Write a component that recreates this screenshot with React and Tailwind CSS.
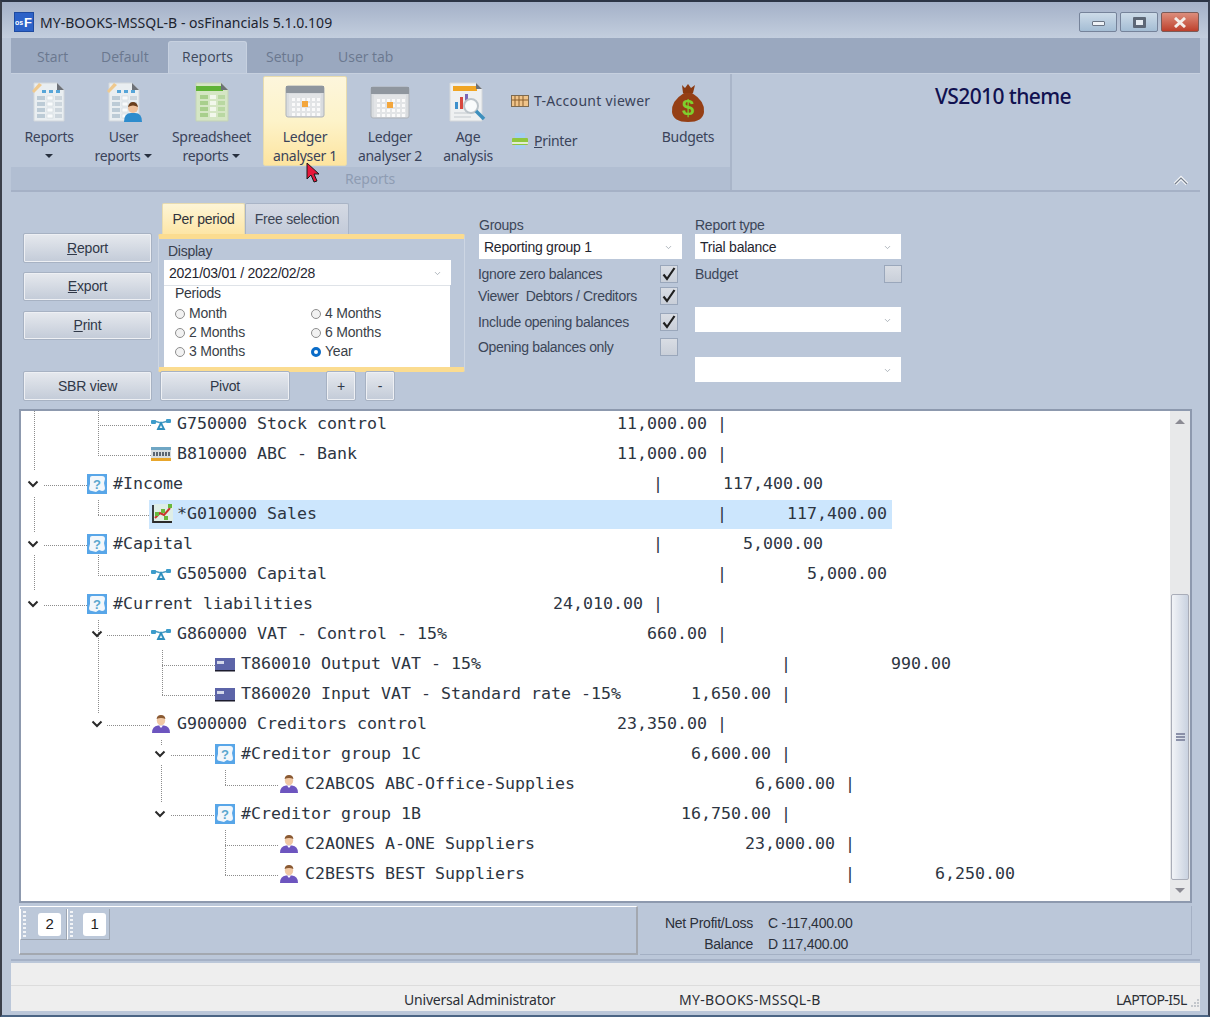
import { ChevronDown } from "lucide-react";

const treeRows = [
  { lvl: 1, icon: "net", name: "G750000 Stock control", l: "11,000.00" },
  { lvl: 1, icon: "bank", name: "B810000 ABC - Bank", l: "11,000.00" },
  { lvl: 0, icon: "q", name: "#Income", r: "117,400.00" },
  { lvl: 1, icon: "chart", name: "*G010000 Sales", r: "117,400.00", sel: true },
  { lvl: 0, icon: "q", name: "#Capital", r: "5,000.00" },
  { lvl: 1, icon: "net", name: "G505000 Capital", r: "5,000.00" },
  { lvl: 0, icon: "q", name: "#Current liabilities", l: "24,010.00" },
  { lvl: 1, icon: "net", name: "G860000 VAT - Control - 15%", l: "660.00" },
  { lvl: 2, icon: "card", name: "T860010 Output VAT - 15%", r: "990.00" },
  { lvl: 2, icon: "card", name: "T860020 Input VAT - Standard rate -15%", l: "1,650.00" },
  { lvl: 1, icon: "person", name: "G900000 Creditors control", l: "23,350.00" },
  { lvl: 2, icon: "q", name: "#Creditor group 1C", l: "6,600.00" },
  { lvl: 3, icon: "person", name: "C2ABCOS ABC-Office-Supplies", l: "6,600.00" },
  { lvl: 2, icon: "q", name: "#Creditor group 1B", l: "16,750.00" },
  { lvl: 3, icon: "person", name: "C2AONES A-ONE Suppliers", l: "23,000.00" },
  { lvl: 3, icon: "person", name: "C2BESTS BEST Suppliers", r: "6,250.00" },
];

const levelPad = ["pl-[64px]", "pl-[128px]", "pl-[192px]", "pl-[256px]"];

// the report is one monospaced string per row, same as the original grid
const rowText = (row) => {
  const left = row.name.padEnd(53 - (row.l || "").length) + (row.l || "");
  return left.padEnd(54) + "|" + (row.r ? row.r.padStart(16) : "");
};

function NetIcon() {
  return (
    <svg width="20" height="20" viewBox="0 0 20 20">
      <path d="M3 7 L10 9 L17 7" stroke="#4a9cc4" strokeWidth="1.5" fill="none" />
      <rect x="0" y="6" width="5" height="4" rx="1" fill="#3d9ccb" />
      <rect x="15" y="5" width="5" height="4" rx="1" fill="#3d9ccb" />
      <path d="M7 15 L10 9 L13 15 Z" fill="#e8f4fa" stroke="#2f8fbe" strokeWidth="1.8" />
    </svg>
  );
}

function BankIcon() {
  return (
    <svg width="20" height="20" viewBox="0 0 20 20">
      <rect x="0" y="3" width="20" height="3" fill="#6fa6c4" />
      <rect x="0" y="6" width="20" height="8" fill="#d7dde0" />
      {[2, 5, 8, 11, 14, 17].map((x) => (
        <rect key={x} x={x} y="8" width="2" height="4" fill="#5b6672" />
      ))}
      <rect x="0" y="14" width="20" height="3" fill="#e8a62c" />
    </svg>
  );
}

function QuestionIcon() {
  return (
    <svg width="20" height="20" viewBox="0 0 20 20">
      <rect width="20" height="20" fill="#58a6e8" />
      <path d="M3 4 Q3 2 5 2 L15 2 Q18 2 18 5 L17 9 L18 14 Q18 17 15 17 L12 16 L9 18 L5 17 Q2 17 2 14 L3 10 Z" fill="#f2f7fb" />
      <text x="10" y="14.5" textAnchor="middle" fontSize="13" fontWeight="700" fill="#5aa7cf" fontFamily="Liberation Sans, sans-serif">?</text>
    </svg>
  );
}

function ChartIcon() {
  return (
    <svg width="22" height="20" viewBox="0 0 22 20">
      <rect x="3" y="0" width="19" height="17" fill="#dfeee6" />
      <path d="M2 1 V18 H21" stroke="#2b2b2b" strokeWidth="1.8" fill="none" />
      <path d="M4 14 L9 9 L13 11 L19 4" stroke="#c8352d" strokeWidth="2" fill="none" />
      <rect x="4" y="8" width="4" height="4" fill="#68b83c" />
      <rect x="10" y="5" width="4" height="4" fill="#68b83c" />
      <rect x="13" y="12" width="4" height="4" fill="#68b83c" />
      <rect x="17" y="0" width="4" height="4" fill="#68b83c" />
    </svg>
  );
}

function CardIcon() {
  return (
    <svg width="20" height="20" viewBox="0 0 20 20">
      <rect x="0" y="4" width="20" height="13" fill="#5c64a8" />
      <rect x="2" y="7" width="7" height="3" fill="#d4d8ea" />
      <rect x="0" y="16" width="20" height="1.5" fill="#1c1c2e" />
    </svg>
  );
}

function PersonIcon() {
  return (
    <svg width="20" height="20" viewBox="0 0 20 20">
      <path d="M1 19 Q1 12 7 11.5 L13 11.5 Q19 12 19 19 Z" fill="#6d55bf" />
      <ellipse cx="10" cy="6.5" rx="4.2" ry="5" fill="#f1c9a5" />
      <path d="M5.6 5 Q6 1 10 1 Q14 1 14.4 5 Q10 3 5.6 5 Z" fill="#8a5a33" />
      <path d="M8 11.5 L10 14 L12 11.5 Z" fill="#ffffff" />
    </svg>
  );
}

const treeIcons = { net: NetIcon, bank: BankIcon, q: QuestionIcon, chart: ChartIcon, card: CardIcon, person: PersonIcon };

// dotted connectors and expanders, coordinates are tree local (page minus 21,411)
function TreeLines() {
  const dots = [
    "M13 0V59", "M13 86V122", "M13 144V179",
    "M77 0V44", "M77 14H130", "M77 44H130",
    "M23 74H67", "M77 89V104", "M77 104H129",
    "M23 134H67", "M77 144V164", "M77 164H129",
    "M23 194H67", "M77 209V302",
    "M86 224H130", "M141 239V284", "M141 254H194", "M141 284H194",
    "M86 314H130", "M140 329V334", "M150 344H194", "M140 354V392",
    "M150 404H194", "M204 359V374", "M204 374H258", "M204 419V464", "M204 434H258", "M204 464H258",
  ];
  const chevrons = [[12, 73], [12, 133], [12, 193], [76, 223], [76, 313], [139, 343], [139, 403]];
  return (
    <svg className="absolute left-0 top-0 pointer-events-none" width="300" height="492">
      {dots.map((d) => (
        <path key={d} d={d} stroke="#8c8c8c" strokeDasharray="1 1" fill="none" shapeRendering="crispEdges" />
      ))}
      {chevrons.map(([x, y]) => (
        <path key={x + "-" + y} d={`M${x - 4.5} ${y - 2.5} L${x} ${y + 2} L${x + 4.5} ${y - 2.5}`} stroke="#2a2a2a" strokeWidth="2" fill="none" />
      ))}
    </svg>
  );
}

function ReportDoc({ user }) {
  return (
    <svg width="38" height="42" viewBox="0 0 38 42">
      <path d="M4 1 H27 L34 8 V39 H4 Z" fill="#e9eef1" stroke="#d3d8dc" />
      <path d="M27 1 L34 8 H27 Z" fill="#6d7178" />
      <path d="M2 9 L9 1 L12 3 L4 11 Z" fill="#efc98e" />
      <rect x="12" y="8" width="4" height="3" fill="#56a5d8" />
      <rect x="19" y="8" width="4" height="3" fill="#56a5d8" />
      <rect x="26" y="8" width="4" height="3" fill="#56a5d8" />
      {[14, 20, 26, 32].map((y) => (
        <g key={y}>
          <rect x="7" y={y} width="8" height="4" fill="#bccbd6" />
          <rect x="17" y={y} width="6" height="4" fill="#f9fbfc" stroke="#c7d0d6" strokeWidth="0.5" />
          <rect x="25" y={y} width="7" height="4" fill="#cdd6dd" />
        </g>
      ))}
      {user && (
        <g>
          <path d="M19 40 Q19 31 26 31 L30 31 Q37 31 37 40 Z" fill="#2d8ccd" />
          <circle cx="28" cy="26" r="5" fill="#eec09a" />
          <path d="M23 25 Q24 20 28 20 Q32 20 33 25 Q28 22 23 25 Z" fill="#6b3f1d" />
        </g>
      )}
    </svg>
  );
}

function SheetDoc() {
  return (
    <svg width="38" height="42" viewBox="0 0 38 42">
      <path d="M3 1 H28 L35 8 V39 H3 Z" fill="#d5e6c4" stroke="#c4d3b6" />
      <rect x="3" y="4" width="27" height="5" fill="#5fb336" />
      <path d="M28 1 L35 8 H28 Z" fill="#6d7178" />
      {[13, 19, 25, 31].map((y) => (
        <g key={y}>
          <rect x="7" y={y} width="8" height="4" fill="#a8cf8c" />
          <rect x="17" y={y} width="6" height="4" fill="#f2f7ec" />
          <rect x="25" y={y} width="7" height="4" fill="#b9d8a2" />
        </g>
      ))}
    </svg>
  );
}

function CalendarIcon() {
  const cols = [7, 12, 17, 22, 27, 32];
  const lines = [13, 18, 23, 28];
  return (
    <svg width="40" height="34" viewBox="0 0 40 34">
      <rect x="1" y="1" width="38" height="31" rx="2" fill="#d9dcdf" stroke="#aeb3b9" />
      <rect x="1" y="1" width="38" height="7" fill="#8f969e" />
      <rect x="4" y="9" width="32" height="22" fill="#e2e4e6" />
      {lines.map((y) => cols.map((x) => <rect key={x + "-" + y} x={x} y={y} width="3" height="3" fill="#fafafa" />))}
      <rect x="17" y="16" width="6" height="6" fill="#f3a63c" />
    </svg>
  );
}

function AgeIcon() {
  return (
    <svg width="38" height="42" viewBox="0 0 38 42">
      <path d="M1 1 H27 L33 7 V39 H1 Z" fill="#eef0f1" stroke="#d5d8da" />
      <rect x="4" y="4" width="24" height="5" fill="#f0a524" />
      <path d="M27 1 L33 7 H27 Z" fill="#6d7178" />
      <rect x="6" y="20" width="3" height="7" fill="#3d90cc" />
      <rect x="11" y="15" width="3" height="12" fill="#d8483f" />
      <rect x="16" y="12" width="3" height="9" fill="#7a68b8" />
      <path d="M5 31H19M5 35H22" stroke="#c3c9ce" />
      <circle cx="22" cy="24" r="7" fill="#f9fbfc" stroke="#bcc4ca" strokeWidth="2" />
      <path d="M27 29 L35 37" stroke="#3d8fbd" strokeWidth="3.5" />
    </svg>
  );
}

function MoneyBag() {
  return (
    <svg width="34" height="40" viewBox="0 0 34 40">
      <path d="M11 2 L14 5 L17 1 L20 5 L24 2 L22 10 H12 Z" fill="#8a3a12" />
      <path d="M13 10 Q0 18 1 29 Q2 39 17 39 Q32 39 33 29 Q34 18 21 10 Z" fill="#953f15" />
      <text x="17" y="32" textAnchor="middle" fontSize="22" fontWeight="700" fill="#7ed02e" fontFamily="Liberation Sans, sans-serif">$</text>
    </svg>
  );
}

function TAccountIcon() {
  return (
    <svg width="18" height="14" viewBox="0 0 18 14">
      <rect x="0.5" y="1.5" width="17" height="11" fill="#f0c48a" stroke="#7d6a50" />
      <path d="M4 2V12M8 2V12M12 2V12M1 6H17" stroke="#8a5f2c" />
    </svg>
  );
}

function PrinterIcon() {
  return (
    <svg width="18" height="18" viewBox="0 0 18 18">
      <rect x="4" y="1" width="10" height="5" fill="#a8cdf0" />
      <rect x="1" y="6" width="16" height="7" rx="1" fill="#8fc73e" />
      <rect x="1" y="10" width="16" height="2" fill="#e3ecd2" />
      <rect x="4" y="13" width="10" height="4" fill="#a8cdf0" />
    </svg>
  );
}

function RibbonButton({ width, children, lines, arrow }) {
  return (
    <div className={`${width} shrink-0 h-[94px] flex flex-col items-center text-center leading-[19px]`}>
      <div className="h-[53px] flex items-center justify-center pt-[4px]">{children}</div>
      <div>{lines[0]}</div>
      <div className="min-h-[19px] flex items-center gap-[4px]">
        {lines[1]}
        {arrow && <span className="border-x-[4px] border-x-transparent border-t-[4px] border-t-[#27303f]" />}
      </div>
    </div>
  );
}

function FormButton({ children, width = "w-[130px]", height = "h-[30px]" }) {
  return (
    <button className={`${width} ${height} shrink-0 flex items-center justify-center rounded-[2px] border border-[#a7b2c3] bg-gradient-to-b from-[#e6e9ee] to-[#c3cbd8] text-[14px] text-[#303848] shadow-[inset_0_0_0_1px_#eef0f4] font-['Liberation_Sans',sans-serif] tracking-[-0.2px]`}>
      {children}
    </button>
  );
}

function Combo({ value, width, font = "text-[14px]" }) {
  return (
    <div className={`${width} h-[25px] bg-white flex items-center justify-between pl-[5px] pr-[9px] pt-[1px] text-[#1f2530] ${font}`}>
      <span>{value}</span>
      <ChevronDown size={9} color="#98a0aa" strokeWidth={2} />
    </div>
  );
}

function CheckBox({ checked }) {
  return (
    <div className="w-[18px] h-[18px] shrink-0 flex items-center justify-center border border-[#9aa7bb] bg-gradient-to-b from-[#d9dde4] to-[#c9cfd9]">
      {checked && (
        <svg width="16" height="16" viewBox="0 0 16 16">
          <path d="M2.5 8.5 L6 13 L13.5 2" stroke="#1f1f1f" strokeWidth="2.2" fill="none" />
        </svg>
      )}
    </div>
  );
}

function CheckRow({ label, checked, className = "" }) {
  return (
    <div className={`w-[200px] h-[18px] flex items-center justify-between text-[14px] text-[#3b4658] tracking-[-0.33px] ${className}`}>
      <span className="whitespace-pre">{label}</span>
      <CheckBox checked={checked} />
    </div>
  );
}

function Radio({ label, on }) {
  return (
    <div className="h-[19px] flex items-center gap-[4px] text-[14px] text-[#3a3f48] tracking-[-0.2px]">
      {on ? (
        <span className="w-[10px] h-[10px] rounded-full border-[3px] border-[#0a6cc8] bg-white" />
      ) : (
        <span className="w-[10px] h-[10px] rounded-full border border-[#8e8e8e] bg-[#f2f2f2]" />
      )}
      {label}
    </div>
  );
}

function Grip() {
  return (
    <div className="w-[4px] h-[28px] flex flex-col gap-[2px] pt-[1px]">
      {[0, 1, 2, 3, 4, 5, 6].map((i) => (
        <span key={i} className="w-[3px] h-[2px] bg-[#f2f4f7]" />
      ))}
    </div>
  );
}

function PageChip({ label, className }) {
  return (
    <div className={`${className} h-[31px] flex items-center pl-[2px] bg-[#bcc8d9] border-r border-b border-[#9ca5b2] border-l border-l-white`}>
      <Grip />
      <span className="w-[23px] h-[23px] rounded-[3px] bg-white flex items-center justify-center text-[15px] text-[#222]">{label}</span>
    </div>
  );
}

export default function App() {
  return (
    <div className="w-[1210px] h-[1019px] overflow-hidden relative bg-white font-['Open_Sans',sans-serif]">
      <div className="w-[1210px] h-[1017px] flex flex-col bg-[#bbc7d9] border-t-2 border-t-[#2c3546] border-l-2 border-l-[#3a3f4a] border-r-2 border-r-[#3a4254] border-b-2 border-b-[#4b6584]">
        {/* title bar */}
        <div className="h-[36px] shrink-0 flex items-center pl-[12px] pr-[9px] pt-[4px] bg-gradient-to-b from-[#a4b1c8] to-[#c3cede]">
          <div className="w-[20px] h-[20px] bg-[#2d62c8] flex items-center justify-end gap-[1px] pr-[1px] border border-[#1e4aa0] font-['Liberation_Sans',sans-serif] text-white">
            <span className="text-[7px] leading-none font-bold">os</span>
            <span className="text-[13px] leading-none font-bold">F</span>
          </div>
          <span className="ml-[6px] text-[14px] text-[#1d2430] tracking-[0.02px] font-['Noto_Sans',sans-serif]">MY-BOOKS-MSSQL-B - osFinancials 5.1.0.109</span>
          <div className="ml-auto flex gap-[3px]">
            <div className="w-[38px] h-[20px] rounded-[2px] border border-[#76839a] bg-gradient-to-b from-[#cddbe8] to-[#a4bdd4] flex items-center justify-center pt-[3px]">
              <span className="w-[13px] h-[5px] bg-[#eef2f6] border border-[#6b7584] rounded-[1px]" />
            </div>
            <div className="w-[38px] h-[20px] rounded-[2px] border border-[#76839a] bg-gradient-to-b from-[#cddbe8] to-[#a4bdd4] flex items-center justify-center">
              <span className="w-[13px] h-[11px] border-[3px] border-[#5d6776] bg-[#e6ecf2] rounded-[1px]" />
            </div>
            <div className="w-[38px] h-[20px] rounded-[2px] border border-[#7b5b58] bg-gradient-to-b from-[#dc8d7c] to-[#bd3f2b] flex items-center justify-center">
              <svg width="14" height="11" viewBox="0 0 14 11">
                <path d="M2 1 L12 10 M12 1 L2 10" stroke="#f4eeea" strokeWidth="3" />
              </svg>
            </div>
          </div>
        </div>

        <div className="ml-[9px] mr-[8px] flex-1 flex flex-col min-h-0">
          {/* tabs */}
          <div className="h-[35px] shrink-0 flex items-end bg-[#9aa8bf] text-[14px] text-[#6b788f]">
            <span className="w-[26px]" />
            <span className="w-[64px] h-[27px]">Start</span>
            <span className="w-[67px] h-[27px]">Default</span>
            <div className="w-[79px] h-[32px] pt-[4px] text-center rounded-t-[3px] bg-[#bbc7d9] text-[#3d485c] border-t border-x border-[#c7d1e0]">Reports</div>
            <span className="w-[91px] h-[27px] pl-[19px]">Setup</span>
            <span className="h-[27px]">User tab</span>
          </div>

          {/* ribbon */}
          <div className="h-[117px] shrink-0 flex border-t border-[#c6d0df]">
            <div className="w-[719px] shrink-0 flex flex-col">
              <div className="h-[93px] flex text-[14px] text-[#3a435a] font-['Noto_Sans',sans-serif] tracking-[-0.3px]">
                <RibbonButton width="w-[76px]" lines={["Reports", ""]} arrow><ReportDoc /></RibbonButton>
                <RibbonButton width="w-[73px]" lines={["User", "reports"]} arrow><ReportDoc user /></RibbonButton>
                <RibbonButton width="w-[103px]" lines={["Spreadsheet", "reports"]} arrow><SheetDoc /></RibbonButton>
                <div className="w-[84px] shrink-0 h-[90px] mt-[2px] rounded-[2px] border border-[#e8dcae] bg-gradient-to-b from-[#fdf6dc] via-[#fdf3c9] to-[#fde49f] flex flex-col items-center leading-[19px]">
                  <div className="h-[51px] flex items-center justify-center"><CalendarIcon /></div>
                  <div>Ledger</div>
                  <div>analyser 1</div>
                </div>
                <RibbonButton width="w-[86px]" lines={["Ledger", "analyser 2"]}><CalendarIcon /></RibbonButton>
                <RibbonButton width="w-[70px]" lines={["Age", "analysis"]}><AgeIcon /></RibbonButton>
                <div className="w-[152px] shrink-0 pl-[8px] pt-[17px] flex flex-col gap-[21px]">
                  <div className="h-[19px] flex items-center gap-[5px] tracking-[0.3px]"><TAccountIcon /> T-Account viewer</div>
                  <div className="h-[19px] flex items-center gap-[5px]"><PrinterIcon /> <span><u>P</u>rinter</span></div>
                </div>
                <RibbonButton width="w-[66px]" lines={["Budgets", ""]}><MoneyBag /></RibbonButton>
              </div>
              <div className="h-[23px] bg-[#b1bed2] flex items-center justify-center text-[14px] text-[#8e9cb2] pr-[1px] font-['Noto_Sans',sans-serif] tracking-[-0.2px]">Reports</div>
            </div>
            <div className="flex-1 border-l-2 border-l-[#a9b5c9] flex flex-col">
              <div className="h-[93px] pl-[203px] pt-[8px] text-[21px] leading-[28px] font-medium text-[#111150] tracking-[-0.6px] font-['Noto_Sans',sans-serif]">VS2010 theme</div>
              <div className="flex justify-end pr-[11px] pt-[8px]">
                <svg width="16" height="12" viewBox="0 0 16 12">
                  <path d="M2 9 L8 3 L14 9" stroke="#f4f6f8" strokeWidth="3.5" fill="none" />
                  <path d="M2 9 L8 3 L14 9" stroke="#767f8c" strokeWidth="1.2" fill="none" />
                </svg>
              </div>
            </div>
          </div>

          {/* workspace */}
          <div className="h-[771px] shrink-0 border-t-2 border-[#a5b1c6] border-b-2 flex flex-col px-[8px]">
            <div className="h-[215px] shrink-0 flex text-[14px] font-['Liberation_Sans',sans-serif] tracking-[-0.25px]">
              {/* left buttons */}
              <div className="w-[139px] pl-[4px] pt-[41px] flex flex-col shrink-0">
                <FormButton width="w-[129px]"><span><u>R</u>eport</span></FormButton>
                <div className="h-[9px]" />
                <FormButton width="w-[129px]" height="h-[29px]"><span><u>E</u>xport</span></FormButton>
                <div className="h-[10px]" />
                <FormButton width="w-[129px]" height="h-[29px]"><span><u>P</u>rint</span></FormButton>
                <div className="h-[31px]" />
                <FormButton width="w-[129px]">SBR view</FormButton>
              </div>

              {/* period panel */}
              <div className="w-[320px] shrink-0 flex flex-col">
                <div className="h-[31px] mt-[11px] flex pl-[4px]">
                  <div className="w-[83px] h-[31px] flex items-center justify-center rounded-t-[2px] bg-gradient-to-b from-[#fdf5d6] to-[#fde6a6] border border-b-0 border-[#e7dbb0] text-[#30333b]">Per period</div>
                  <div className="w-[104px] h-[31px] flex items-center justify-center rounded-t-[2px] bg-gradient-to-b from-[#d5dae4] to-[#c3cbd9] border border-b-0 border-[#a9b4c6] text-[#3c4555]">Free selection</div>
                </div>
                <div className="w-[307px] h-[138px] flex flex-col border-y-[5px] border-y-[#fbdc90] border-x border-x-[#cdd6e3] rounded-[2px] pl-[5px]">
                  <div className="h-[21px] pt-[4px] pl-[4px] leading-[16px] text-[#39404e]">Display</div>
                  <Combo value="2021/03/01 / 2022/02/28" width="w-[287px]" />
                  <div className="w-[286px] flex-1 bg-white border-t border-[#dfe3e8] pl-[11px]">
                    <div className="h-[15px] leading-[15px] text-[#333842]">Periods</div>
                    <div className="grid grid-cols-[136px_1fr] pt-[3px]">
                      <Radio label="Month" />
                      <Radio label="4 Months" />
                      <Radio label="2 Months" />
                      <Radio label="6 Months" />
                      <Radio label="3 Months" />
                      <Radio label="Year" on />
                    </div>
                  </div>
                </div>
                <div className="flex pl-[2px] -mt-[1px]">
                  <FormButton>Pivot</FormButton>
                  <div className="w-[36px]" />
                  <FormButton width="w-[30px]">+</FormButton>
                  <div className="w-[9px]" />
                  <FormButton width="w-[30px]">-</FormButton>
                </div>
              </div>

              {/* groups */}
              <div className="w-[217px] shrink-0 pt-[25px] text-[#3b4658]">
                <div className="h-[17px] leading-[17px] pl-[1px]">Groups</div>
                <Combo value="Reporting group 1" width="w-[203px] ml-[1px]" />
                <CheckRow className="mt-[6px]" label="Ignore zero balances" checked />
                <CheckRow className="mt-[4px]" label="Viewer  Debtors / Creditors" checked />
                <CheckRow className="mt-[8px]" label="Include opening balances" checked />
                <CheckRow className="mt-[7px]" label="Opening balances only" />
              </div>

              {/* report type */}
              <div className="w-[210px] shrink-0 pt-[25px] text-[#3b4658]">
                <div className="h-[17px] leading-[17px]">Report type</div>
                <Combo value="Trial balance" width="w-[206px]" />
                <div className="w-[207px] h-[18px] mt-[6px] flex items-center justify-between">
                  <span>Budget</span>
                  <CheckBox />
                </div>
                <div className="h-[24px]" />
                <Combo value="" width="w-[206px]" />
                <div className="h-[25px]" />
                <Combo value="" width="w-[206px]" />
              </div>
            </div>

            {/* tree */}
            <div className="h-[494px] mt-[2px] shrink-0 border-2 border-[#8d99ae] bg-white flex overflow-hidden">
              <div className="flex-1 relative overflow-hidden font-['DejaVu_Sans_Mono',monospace] text-[16.63px] text-[#2d3542]">
                <TreeLines />
                <div className="-mt-[2px]">
                  {treeRows.map((row) => {
                    const Icon = treeIcons[row.icon];
                    return (
                      <div key={row.name} className={`h-[30px] flex items-center ${levelPad[row.lvl]}`}>
                        <div className={`h-[29px] w-fit flex items-center pl-[2px] pr-[5px] ${row.sel ? "bg-[#cce6fd]" : ""}`}>
                          <Icon />
                          <span className={`whitespace-pre ${row.sel ? "ml-[4px]" : "ml-[6px]"}`}>{rowText(row)}</span>
                        </div>
                      </div>
                    );
                  })}
                </div>
              </div>
              {/* scrollbar */}
              <div className="w-[20px] shrink-0 bg-[#e8e9ea] flex flex-col items-center">
                <div className="h-[20px] flex items-center justify-center">
                  <span className="border-x-[5px] border-x-transparent border-b-[5px] border-b-[#8b8b93]" />
                </div>
                <div className="h-[163px]" />
                <div className="w-[18px] h-[286px] rounded-[2px] bg-gradient-to-r from-[#f2f4f7] to-[#c9d2e0] border border-[#a9adb8] flex flex-col items-center justify-center gap-[1px]">
                  <span className="w-[9px] h-[2px] bg-[#8a90a8]" />
                  <span className="w-[9px] h-[2px] bg-[#8a90a8]" />
                  <span className="w-[9px] h-[2px] bg-[#8a90a8]" />
                </div>
                <div className="flex-1 flex items-center justify-center">
                  <span className="border-x-[5px] border-x-transparent border-t-[5px] border-t-[#8b8b93]" />
                </div>
              </div>
            </div>

            {/* bottom panels */}
            <div className="h-[50px] shrink-0 mt-[3px] flex gap-[2px] font-['Liberation_Sans',sans-serif] tracking-[-0.25px]">
              <div className="w-[619px] h-[49px] border-l border-t border-white border-r-2 border-b-2 border-r-[#a3a8b0] border-b-[#a3a8b0] flex items-start pt-[2px]">
                <PageChip label="2" className="w-[47px] gap-[11px]" />
                <PageChip label="1" className="w-[43px] gap-[9px]" />
              </div>
              <div className="flex-1 h-[49px] border-r border-b border-[#a4b0c4] grid grid-cols-[113px_1fr] gap-x-[15px] pt-[7px] text-[14px] leading-[20px] text-[#2b303a]">
                <span className="text-right">Net Profit/Loss</span>
                <span>C -117,400.00</span>
                <span className="text-right">Balance</span>
                <span>D 117,400.00</span>
              </div>
            </div>
          </div>

          {/* status bar */}
          <div className="h-[48px] mt-[2px] shrink-0 flex flex-col bg-[#eeeeee]">
            <div className="h-[23px] border-b border-[#dcdcdc]" />
            <div className="flex-1 flex items-center pt-[1px] text-[14px] text-[#2b2f36] font-['Noto_Sans',sans-serif] tracking-[-0.2px]">
              <span className="w-[393px]" />
              <span className="w-[275px]">Universal Administrator</span>
              <span className="w-[437px] tracking-[0.3px]">MY-BOOKS-MSSQL-B</span>
              <span className="tracking-[-0.55px]">LAPTOP-I5L</span>
              <svg className="ml-auto mr-[1px] mt-[8px]" width="8" height="8" viewBox="0 0 8 8">
                <path d="M6 0h2v2H6zM3 3h2v2H3zM6 3h2v2H6zM0 6h2v2H0zM3 6h2v2H3zM6 6h2v2H6z" fill="#c3c7cc" />
              </svg>
            </div>
          </div>
        </div>
      </div>

      {/* mouse pointer over the ribbon */}
      <svg className="absolute left-[306px] top-[162px]" width="15" height="22" viewBox="0 0 15 22">
        <path d="M1 1 V17 L5 13 L8 20 L11 19 L8 12 L13 12 Z" fill="#e8173a" stroke="#1a1a1a" strokeWidth="1" />
      </svg>
    </div>
  );
}
